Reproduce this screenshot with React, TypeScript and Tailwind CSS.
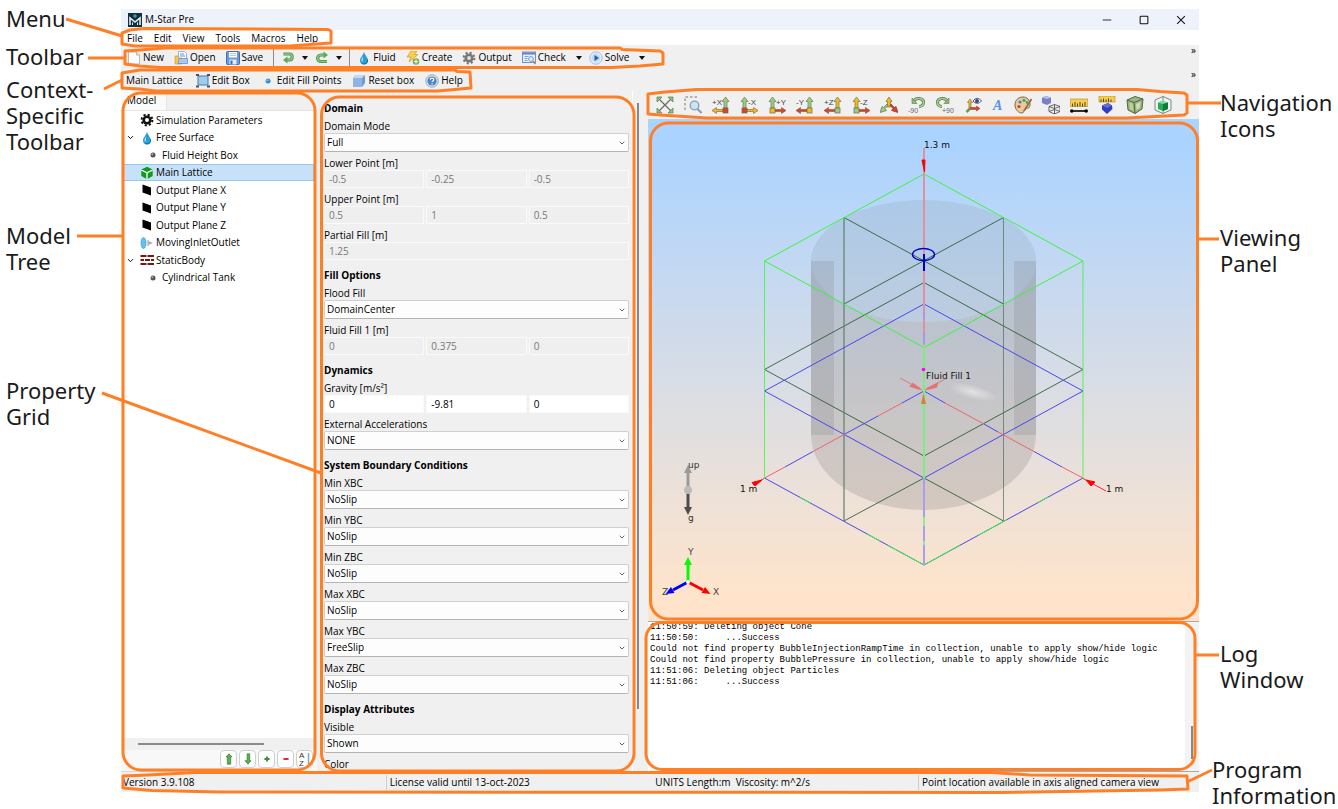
import React, { useId } from 'react';
import { ChevronDown } from 'lucide-react';

type IconProps = { children: React.ReactNode; className?: string };

const Icon = ({ children, className = 'w-[14px] h-[14px]' }: IconProps) => (
  <svg viewBox="0 0 14 14" className={`${className} shrink-0`} fill="none" aria-hidden="true">
    {children}
  </svg>
);

const NewIcon = () => (
  <Icon>
    <path d="M1.5 1h8l3 3v9h-11z" fill="#fdfdfd" stroke="#b9b9b9" />
    <path d="M9.5 1v3h3" fill="#e4e4e4" stroke="#b9b9b9" />
  </Icon>
);

const OpenIcon = () => (
  <Icon>
    <path d="M4.5.5h6l2 2v7h-8z" fill="#fff" stroke="#8fb0dd" />
    <path d="M6 3h4M6 5h5" stroke="#5b8fd0" />
    <path d="M1 5h3l1 2h3v6H1z" fill="#f2c65a" stroke="#d79b2c" strokeWidth=".7" />
    <path d="M5 7.5h8.5v5H4z" fill="#a9c8ef" stroke="#5c88c4" strokeWidth=".7" />
  </Icon>
);

const SaveIcon = () => (
  <Icon>
    <rect x=".5" y=".5" width="13" height="13" rx="1" fill="#6c9ad6" stroke="#3f6fb3" />
    <rect x="3" y="1" width="8" height="5.5" fill="#fff" />
    <path d="M4 2.5h6M4 4.5h6" stroke="#9db8dc" strokeWidth=".8" />
    <rect x="3.5" y="8.5" width="7" height="5" fill="#e5ecf6" />
    <rect x="4.5" y="9.5" width="2" height="4" fill="#3f6fb3" />
  </Icon>
);

const UndoIcon = () => (
  <Icon>
    <path d="M2.5 3h6c3.5 0 3.5 6 0 6H6" stroke="#4b8f4a" strokeWidth="3.2" />
    <path d="M2.5 3h6c3.5 0 3.5 6 0 6H6" stroke="#86c97c" strokeWidth="1.6" />
    <path d="M6.5 5.5v7L2 9z" fill="#5aa957" />
  </Icon>
);

const RedoIcon = () => (
  <Icon>
    <path d="M12 10.5H6c-4.500 0-4.500-6.500 0-6.500h3" stroke="#4b8f4a" strokeWidth="3.2" />
    <path d="M12 10.5H6c-4.500 0-4.500-6.500 0-6.500h3" stroke="#86c97c" strokeWidth="1.6" />
    <path d="M8.5.5v7L13 4z" fill="#5aa957" />
  </Icon>
);

const DropIcon = () => (
  <Icon>
    <path d="M7 .5C7.5 4 11 6.5 11 9.5a4 4 0 0 1-8 0C3 6.5 6.500 4 7 .5z" fill="#2b9fd4" />
    <path d="M6 5.5C4.8 7.5 4.200 8.5 4.5 10c.6 1 1.500.5 1.500-1z" fill="#9fe0fa" />
    <path d="M10.5 8.5a3.500 3.500 0 0 1-5 4" stroke="#14679b" />
  </Icon>
);

const CreateIcon = () => (
  <Icon>
    <path d="M5 0h6L8.5 3.5H12L3 11l2-5H1z" fill="#f8cf4e" stroke="#d9a02b" strokeWidth=".8" />
    <circle cx="10" cy="10.5" r="3.3" fill="#7cae5b" />
    <path d="M8 10.5h4M10 8.5v4" stroke="#eaf5e0" strokeWidth="1.2" />
  </Icon>
);

const GearIcon = ({ color, hole }: { color: string; hole: string }) => (
  <Icon>
    <circle cx="7" cy="7" r="5.4" stroke={color} strokeWidth="2" strokeDasharray="2.120 2.120" />
    <circle cx="7" cy="7" r="4.6" fill={color} />
    <circle cx="7" cy="7" r="2" fill={hole} />
  </Icon>
);

const CheckIcon = () => (
  <Icon>
    <rect x=".5" y="1" width="13" height="10.5" fill="#e8f0fa" stroke="#6a93cd" />
    <path d="M1 2.5h12" stroke="#5583c6" strokeWidth="2" />
    <path d="M2.5 5.5h4M2.5 7.5h3M2.5 9.5h3" stroke="#7da3d8" />
    <circle cx="9" cy="8" r="2.4" fill="#d8ecfb" stroke="#7f9cbb" />
    <path d="m11 10 2.500 3" stroke="#c07a3c" strokeWidth="1.5" />
  </Icon>
);

const SolveIcon = () => (
  <Icon>
    <circle cx="7" cy="7" r="6.2" fill="#e6f0fb" stroke="#a3bddd" />
    <circle cx="7" cy="7" r="4.4" fill="#c3daf4" />
    <path d="M5.5 4v6L10 7z" fill="#1e5fb8" />
  </Icon>
);

const BoxIcon = () => (
  <Icon>
    <rect x="2" y="2" width="10" height="9" fill="#9fcbed" stroke="#4a7ba8" />
    <path d="M0 1h3M0 12.5h3M11 1h3M11 12.5h3" stroke="#44546a" strokeWidth="2" />
  </Icon>
);

const DotIcon = ({ fill }: { fill: string }) => (
  <Icon>
    <circle cx="7" cy="7" r="2.5" fill={fill} />
    <circle cx="6.3" cy="6.3" r="1" fill="#fff" opacity=".5" />
  </Icon>
);

const CubeIcon = () => (
  <Icon>
    <path d="m1 4 3-3h9v8l-3 4H1z" fill="#6f9ad2" />
    <path d="m1 4 3-3h9l-3 3z" fill="#c4d9f3" />
    <path d="M1 4h9v9H1z" fill="#8fb4e3" />
  </Icon>
);

const HelpIcon = () => (
  <Icon>
    <circle cx="7" cy="7" r="6.2" fill="#dbe8f6" stroke="#8aa8cc" />
    <circle cx="7" cy="7" r="4.6" fill="#4f83c2" />
    <path d="M5.3 5.8c0-2.200 3.500-2.200 3.500-.2 0 1.300-1.700 1.300-1.700 2.500M7.100 9.200v1.200" stroke="#fff" strokeWidth="1.2" />
  </Icon>
);

const LatticeIcon = () => (
  <Icon>
    <path d="M7 .8 12.7 3.5v6.6L7 13.2 1.3 10.1V3.5z" fill="#0e9b1d" />
    <path d="M1.300 4 7 6.8 12.7 4M7 6.8v6.4" stroke="#fff" strokeWidth="1.3" />
  </Icon>
);

const PlaneIcon = () => (
  <Icon>
    <path d="m2.500 1.5 8.500 3v8l-8.500-3z" fill="#000" />
  </Icon>
);

const InletIcon = () => (
  <Icon>
    <ellipse cx="3.5" cy="7" rx="2.5" ry="5.5" fill="#5cc4ee" stroke="#3c8fb8" strokeWidth=".6" />
    <path d="M8.500 5 13 7 8.500 9z" fill="#a7adb2" />
    <path d="M8 4v6" stroke="#8f989e" />
  </Icon>
);

const BrickIcon = () => (
  <Icon>
    <path d="M.5 3h6M7.500 3H14M.5 7H4M5 7h5M11 7h3M.5 11h6M7.500 11H14" stroke="#7c1212" strokeWidth="2.2" />
  </Icon>
);

/* ---------- Navigation toolbar drawings ---------- */

const NavIcon = ({ children }: { children: React.ReactNode }) => (
  <svg viewBox="0 0 18 18" className="w-[18px] h-[18px] shrink-0" fill="none" aria-hidden="true">
    {children}
  </svg>
);

type AxisProps = { label: string; side: 'left' | 'right'; up: string; across: string; hub: string };

const AxisIcon = ({ label, side, up, across, hub }: AxisProps) => {
  const left = side === 'left';
  return (
    <NavIcon>
      <path
        d={left ? 'M13.5 1 17 5.5h-2V12h-3V5.5h-2z' : 'M4.5 1 8 5.5H6V12H3V5.5H1z'}
        fill={up}
        stroke="#6d7a58"
        strokeWidth=".7"
      />
      <path
        d={left ? 'M0 14.5 4.500 11.5v2H11v2H4.500v2z' : 'M18 14.5 13.500 11.5v2H7v2h6.500v2z'}
        fill={across}
        stroke="#7a5a3a"
        strokeWidth=".6"
      />
      <rect x={left ? 11 : 2} y="12" width="5" height="5" fill={hub} stroke="#6a6a4a" strokeWidth=".7" />
      <text x={left ? 0 : 8} y="9" fontSize="8" fontFamily="Liberation Sans, sans-serif" fill="#444">
        {label}
      </text>
    </NavIcon>
  );
};

const green = '#9ccb84';
const yellow = '#f5b81f';
const red = '#dd3f2c';

const navItems: { name: string; narrow?: boolean; icon: React.ReactNode }[] = [
  {
    name: 'Fit view',
    icon: (
      <NavIcon>
        <path d="m3 3 12 12M15 3 3 15" stroke="#666c5e" strokeWidth="1.2" />
        <path d="M1 1h5L1 6zM17 1h-5l5 5zM1 17h5l-5-5zM17 17h-5l5-5z" fill="#8fc07c" stroke="#5a7d4c" strokeWidth=".7" />
      </NavIcon>
    ),
  },
  {
    name: 'Zoom to box',
    icon: (
      <NavIcon>
        <path d="M1 14V1h14" stroke="#777" strokeDasharray="2.5 2" />
        <circle cx="10.5" cy="9.5" r="4.3" fill="#c9e6f7" stroke="#8b9aa6" strokeWidth="1.3" />
        <path d="m13.500 13 4 4" stroke="#8b9aa6" strokeWidth="2" />
      </NavIcon>
    ),
  },
  { name: 'View +X', icon: <AxisIcon label="+X" side="left" up={green} across={yellow} hub={red} /> },
  { name: 'View -X', icon: <AxisIcon label="-X" side="right" up={green} across={yellow} hub={red} /> },
  { name: 'View +Y', icon: <AxisIcon label="+Y" side="right" up={green} across={red} hub={yellow} /> },
  { name: 'View -Y', icon: <AxisIcon label="-Y" side="left" up={green} across={red} hub={yellow} /> },
  { name: 'View +Z', icon: <AxisIcon label="+Z" side="left" up={yellow} across={red} hub={green} /> },
  { name: 'View -Z', icon: <AxisIcon label="-Z" side="right" up={yellow} across={red} hub={green} /> },
  {
    name: 'Isometric view',
    icon: (
      <NavIcon>
        <path d="M9 1l3 4.500h-1.500V11h-3V5.500H6z" fill={yellow} stroke="#7a6a3a" strokeWidth=".7" />
        <path d="m8 9.500-3 3 1.500 2L0 16.500 2 10.500l1.500 1L7 8z" fill={green} stroke="#5a7048" strokeWidth=".7" />
        <path d="m10 9.500 3 3-1.500 2 6.500 2-2-6-1.500 1L11 8z" fill={red} stroke="#7a3a2a" strokeWidth=".7" />
      </NavIcon>
    ),
  },
  {
    name: 'Rotate -90',
    icon: (
      <NavIcon>
        <path d="M6 5c2-4 9.500-3 9.500 1.500 0 2.500-2 4-4.500 4" stroke="#5d7a4e" strokeWidth="3" />
        <path d="M6 5c2-4 9.500-3 9.500 1.500 0 2.500-2 4-4.500 4" stroke="#a5cf90" strokeWidth="1.5" />
        <path d="M4 2v5.500h5z" fill="#8dbb78" stroke="#5d7a4e" strokeWidth=".6" />
        <text x="0" y="17" fontSize="7" fontFamily="Liberation Sans, sans-serif" fill="#666">-90</text>
      </NavIcon>
    ),
  },
  {
    name: 'Rotate +90',
    icon: (
      <NavIcon>
        <path d="M11 5C9 1 1.500 2 1.500 6.500c0 2.500 2 4 4.500 4" stroke="#5d7a4e" strokeWidth="3" />
        <path d="M11 5C9 1 1.500 2 1.500 6.500c0 2.500 2 4 4.500 4" stroke="#a5cf90" strokeWidth="1.5" />
        <path d="M13 2v5.500H8z" fill="#8dbb78" stroke="#5d7a4e" strokeWidth=".6" />
        <text x="6" y="17" fontSize="7" fontFamily="Liberation Sans, sans-serif" fill="#666">+90</text>
      </NavIcon>
    ),
  },
  {
    name: 'Orientation axes',
    icon: (
      <NavIcon>
        <path d="M6 3 8.500 6.500H7V13H5V6.500H3.500z" fill={yellow} stroke="#6d6a38" strokeWidth=".6" />
        <path d="M16 12.500 12.500 10v1.500H6v2h6.500V15z" fill={red} stroke="#7a3a2a" strokeWidth=".5" />
        <path d="m6.500 12-4 4" stroke="#6a9a50" strokeWidth="2.5" />
        <path d="M9 5c2.500-3.500 6-3.500 8.500 0-2.500 3-6 3-8.500 0z" fill="#fff" stroke="#555" />
        <circle cx="13" cy="5" r="2" fill="#3b3f9c" />
      </NavIcon>
    ),
  },
  {
    name: 'Text labels',
    narrow: true,
    icon: (
      <NavIcon>
        <text x="4" y="14" fontSize="14" fontStyle="italic" fontWeight="700" fontFamily="Liberation Serif, serif" fill="#5a93e0">
          A
        </text>
      </NavIcon>
    ),
  },
  {
    name: 'Colors',
    icon: (
      <NavIcon>
        <path d="M9 1C4 1 1 4.500 1 9c0 5 4 8 7 8 2.500 0 1-3 3-4s5 0 5-4.500S13 1 9 1z" fill="#eacb9a" stroke="#7d6648" />
        <circle cx="6" cy="6" r="1.6" fill="#3a8ad8" />
        <circle cx="10" cy="4.3" r="1.6" fill="#4aa84a" />
        <circle cx="5" cy="10.5" r="1.6" fill="#da3a2e" />
        <circle cx="13" cy="6.5" r="1.4" fill="#3aa0b8" />
        <path d="M17.500 3 10 15" stroke="#a06b35" strokeWidth="1.8" />
      </NavIcon>
    ),
  },
  {
    name: 'Solid or wireframe',
    icon: (
      <NavIcon>
        <path d="M0 1.500 4 0l5 1.500V7L5 9 0 7z" fill="#7a80c8" />
        <path d="M0 1.500 4 0l5 1.500L5 3z" fill="#b9bdea" />
        <path d="m7 10.500 5.500-2 5.500 2v5L12.500 18 7 15.500zM12.500 8.500V18M7 10.500l5.500 2 5.500-2M7 15.500l5.500-2 5.500 2" stroke="#555" strokeWidth=".9" />
      </NavIcon>
    ),
  },
  {
    name: 'Measure distance',
    icon: (
      <NavIcon>
        <rect y="3" width="18" height="7.5" fill="#f7cd4c" stroke="#a98828" strokeWidth=".6" />
        <path d="M2.500 10.500v-3M5 10.500V6M7.500 10.500v-3M10 10.500V6M12.500 10.500v-3M15 10.500V6" stroke="#5a4714" />
        <path d="M1 15h16" stroke="#000" strokeWidth="1.6" />
        <circle cx="1.8" cy="15" r="1.8" fill="#000" />
        <circle cx="16.2" cy="15" r="1.8" fill="#000" />
      </NavIcon>
    ),
  },
  {
    name: 'Measure body',
    icon: (
      <NavIcon>
        <rect x="1" y="0" width="16" height="6" fill="#f7cd4c" stroke="#a98828" strokeWidth=".6" />
        <path d="M3 6V3.500M5.500 6V2.500M8 6V3.500M10.500 6V2.500M13 6V3.500" stroke="#5a4714" />
        <path d="m4 9.500 6-2.500 4 2.500.5 3.500-5.500 5-5-4.500z" fill="#2f3fc4" />
        <path d="m4 9.500 6-2.500 4 2.500-5 2.500z" fill="#6470c8" />
      </NavIcon>
    ),
  },
  {
    name: 'Show domain box',
    icon: (
      <NavIcon>
        <path d="m1 4 8-3.500L17 3l-1 10-7 4.500L2 14z" fill="#9cb582" stroke="#4f6a3c" />
        <path d="m1 4 7 2.500L17 3M8 6.500l1 11" stroke="#4f6a3c" />
        <path d="m3.500 6.500 3 1 .8 7-3.300-1.500z" fill="#b9d29e" />
        <path d="m10 8 4.500-2-1 6-3 2z" fill="#cfdcc0" />
      </NavIcon>
    ),
  },
  {
    name: 'Show fluid box',
    icon: (
      <NavIcon>
        <path d="m1 4 8-3.500L17 4v10l-8 3.500L1 14zM9 .5v17" fill="#f0f3f1" stroke="#7d8b84" />
        <path d="m4 6.500 4-1.500 6 1.500v6.500l-5 2-5-2z" fill="#1fae54" />
        <path d="m4 6.500 4-1.500 6 1.500-5 1.500z" fill="#7fe0a2" />
        <path d="M9 8v7l5-2V6.500z" fill="#0f7d38" />
      </NavIcon>
    ),
  },
];

/* ---------- Small controls ---------- */

const ToolButton = ({ icon, label }: { icon: React.ReactNode; label: string }) => (
  <button type="button" className="flex items-center gap-[2px] whitespace-nowrap">
    {icon}
    <span>{label}</span>
  </button>
);

const Caret = ({ label }: { label: string }) => (
  <button type="button" aria-label={label} className="w-[6px] h-4 flex items-center">
    <svg viewBox="0 0 6 4" className="w-[6px] h-[4px]" aria-hidden="true">
      <path d="M0 0h6L3 4z" fill="#111" />
    </svg>
  </button>
);

const Separator = () => <div className="w-px h-[18px] bg-[#8c8c8c]"></div>;

const SelectField = ({ label, value }: { label: string; value: string }) => {
  const id = useId();
  return (
    <div className="mb-1">
      <label htmlFor={id} className="block leading-[14px]">{label}</label>
      <div className="relative">
        <select
          id={id}
          defaultValue={value}
          className="block w-full h-[19px] appearance-none border border-[#d0d0d0] border-b-[#b4b4b4] rounded-xs bg-[#fdfdfd] pl-[2px] leading-[17px] text-black"
        >
          <option>{value}</option>
        </select>
        <ChevronDown className="absolute right-[3px] top-[6px] w-2 h-2 text-[#444] pointer-events-none" strokeWidth={2.5} />
      </div>
    </div>
  );
};

const InputField = ({ label, values, disabled = true }: { label: string; values: string[]; disabled?: boolean }) => {
  const id = useId();
  return (
    <div className="mb-1">
      <label htmlFor={`${id}-0`} className="block leading-[14px]">{label}</label>
      <div className="flex gap-[2px]">
        {values.map((value, i) => (
          <input
            key={i}
            id={`${id}-${i}`}
            aria-label={`${label} ${i + 1}`}
            defaultValue={value}
            disabled={disabled}
            className="min-w-0 flex-1 h-[18px] border border-[#fafafa] bg-white pl-[4px] text-black disabled:bg-[#efefef] disabled:text-[#777]"
          />
        ))}
      </div>
    </div>
  );
};

const Section = ({ title, children }: { title: string; children: React.ReactNode }) => (
  <section className="mb-2">
    <h3 className="h-[18px] leading-[14px] font-bold">{title}</h3>
    {children}
  </section>
);

const treeItems = [
  { label: 'Simulation Parameters', icon: <GearIcon color="#111" hole="#fff" /> },
  { label: 'Free Surface', icon: <DropIcon />, open: true },
  { label: 'Fluid Height Box', icon: <DotIcon fill="#555" />, nested: true },
  { label: 'Main Lattice', icon: <LatticeIcon />, selected: true },
  { label: 'Output Plane X', icon: <PlaneIcon /> },
  { label: 'Output Plane Y', icon: <PlaneIcon /> },
  { label: 'Output Plane Z', icon: <PlaneIcon /> },
  { label: 'MovingInletOutlet', icon: <InletIcon /> },
  { label: 'StaticBody', icon: <BrickIcon />, open: true },
  { label: 'Cylindrical Tank', icon: <DotIcon fill="#555" />, nested: true },
];

const TreeAction = ({ label, children }: { label: string; children: React.ReactNode }) => (
  <button
    type="button"
    aria-label={label}
    className="w-[17px] h-[18px] grid place-items-center bg-white border border-[#cfcfcf] rounded-sm"
  >
    {children}
  </button>
);

const ModelTree = () => (
  <div className="w-[196px] shrink-0 flex flex-col bg-[#f8f8f8]">
    <div className="h-5 shrink-0 flex bg-[#f0f0f0] border-b border-[#e4e4e4]">
      <button type="button" className="w-[46px] bg-[#fafafa] border-r border-[#e4e4e4] text-left pl-[6px]">
        Model
      </button>
    </div>
    <ul className="flex-1 min-h-0 bg-white ml-px mr-[3px]">
      {treeItems.map(item => (
        <li
          key={item.label}
          className={`flex items-center gap-[2px] pl-1 odd:h-[18px] even:h-[17px] border ${
            item.selected ? 'bg-[#c7e2f8] border-[#94c8f0]' : 'border-transparent'
          }`}
        >
          <span className="w-[11px] shrink-0">
            {item.open && <ChevronDown className="w-[9px] h-[9px] -ml-px text-black" strokeWidth={2.5} />}
          </span>
          {item.nested && <span className="w-1 shrink-0"></span>}
          {item.icon}
          <span className="whitespace-nowrap">{item.label}</span>
        </li>
      ))}
    </ul>
    <div className="h-3 shrink-0 bg-[#f0f0f0] flex items-center pl-[17px]">
      <div className="w-[126px] h-[2px] bg-[#8a8a8a]"></div>
    </div>
    <div className="h-[22px] shrink-0 flex justify-end gap-[2px] pr-1 border-b border-[#d8d8d8]">
      <TreeAction label="Move up">
        <Icon className="w-3 h-3">
          <path d="M7 1l3.500 3.500H9V13H5V4.500H3.500z" fill="#5fae57" stroke="#2f7a2c" strokeWidth=".8" />
        </Icon>
      </TreeAction>
      <TreeAction label="Move down">
        <Icon className="w-3 h-3">
          <path d="M7 13l3.500-4H9V1H6v8H3.500z" fill="#5fae57" stroke="#2f7a2c" strokeWidth=".8" />
        </Icon>
      </TreeAction>
      <TreeAction label="Add">
        <Icon className="w-3 h-3">
          <path d="M7 4v6M4 7h6" stroke="#3d8c34" strokeWidth="2.2" />
        </Icon>
      </TreeAction>
      <TreeAction label="Remove">
        <Icon className="w-3 h-3">
          <path d="M4 7h6" stroke="#d8232a" strokeWidth="2.2" />
        </Icon>
      </TreeAction>
      <TreeAction label="Sort">
        <Icon className="w-[14px] h-4">
          <text x="1" y="6" fontSize="8" fontFamily="Liberation Sans, sans-serif" fill="#333">A</text>
          <text x="1" y="13.5" fontSize="8" fontFamily="Liberation Sans, sans-serif" fill="#333">Z</text>
          <path d="M10.500 1v11" stroke="#7aa7d8" strokeWidth="1.5" />
        </Icon>
      </TreeAction>
    </div>
  </div>
);

const PropertyGrid = () => (
  <div className="w-[331px] shrink-0 flex min-h-0 overflow-hidden">
    <div className="flex-1 min-w-0 overflow-hidden pl-[7px] pr-[3px] pt-[10px] border-r border-white">
      <Section title="Domain">
        <SelectField label="Domain Mode" value="Full" />
        <InputField label="Lower Point [m]" values={['-0.5', '-0.25', '-0.5']} />
        <InputField label="Upper Point [m]" values={['0.5', '1', '0.5']} />
        <InputField label="Partial Fill [m]" values={['1.25']} />
      </Section>
      <Section title="Fill Options">
        <SelectField label="Flood Fill" value="DomainCenter" />
        <InputField label="Fluid Fill 1 [m]" values={['0', '0.375', '0']} />
      </Section>
      <Section title="Dynamics">
        <InputField label="Gravity [m/s²]" values={['0', '-9.81', '0']} disabled={false} />
        <SelectField label="External Accelerations" value="NONE" />
      </Section>
      <Section title="System Boundary Conditions">
        <SelectField label="Min XBC" value="NoSlip" />
        <SelectField label="Min YBC" value="NoSlip" />
        <SelectField label="Min ZBC" value="NoSlip" />
        <SelectField label="Max XBC" value="NoSlip" />
        <SelectField label="Max YBC" value="FreeSlip" />
        <SelectField label="Max ZBC" value="NoSlip" />
      </Section>
      <Section title="Display Attributes">
        <SelectField label="Visible" value="Shown" />
        <SelectField label="Color" value="" />
      </Section>
    </div>
    <div className="w-[15px] shrink-0 pt-3 pb-[63px] pl-[4px]">
      <div className="w-[2px] h-full bg-[#85898c]"></div>
    </div>
  </div>
);

const Viewport = () => (
  <div className="flex-1 min-h-0 bg-linear-to-b from-[#abd3ff] from-5% to-[#ffe4cb] to-95%">
    <svg
      viewBox="648 119 551 501"
      preserveAspectRatio="xMidYMin meet"
      className="w-full h-full"
      fill="none"
      fontFamily="DejaVu Sans, sans-serif"
      fontSize="9"
    >
      <defs>
        <radialGradient id="shine">
          <stop offset="0" stopColor="#fff" stopOpacity=".5" />
          <stop offset="1" stopColor="#fff" stopOpacity="0" />
        </radialGradient>
      </defs>

      {/* Tank */}
      <path d="M811 261V435a112.5 75 0 0 0 225 0V261a112.5 61 0 0 1-225 0z" fill="#8c8480" fillOpacity=".27" />
      <ellipse cx="923.5" cy="261" rx="112.5" ry="61" fill="#93a5b8" fillOpacity=".26" />
      <path d="M811 261h23v174h-23zM1014 261h22v174h-22z" fill="#77777c" fillOpacity=".2" />
      <ellipse cx="973" cy="392" rx="25" ry="7" fill="url(#shine)" transform="rotate(15 973 392)" />

      {/* Mid planes */}
      <g stroke="#1c5426" opacity=".8">
        <path d="M844 217.5 1003.5 304M1003.5 217.5 844 304" />
        <path d="M924 282.5 1083 369.5 924 456 764.5 369.5z" />
        <path d="M844 521 924 478 1003.5 521" />
      </g>
      <path d="M844 217.5V521" stroke="#5f7f6c" strokeWidth="2" opacity=".6" />
      <path d="M1003.5 217.5V521" stroke="#4d7058" opacity=".7" />

      {/* Fluid box */}
      <g stroke="#4848f0">
        <path d="M924 304 1083 391 924 478 764.5 391z" />
        <path d="M902 403 924 391 945 403M878 416 845 434M813 451.5 785 467M984 424 998 432M1034 451.5 1062 467" />
        <path d="M764.5 478 924 565 1083 478" />
      </g>
      <g stroke="#f06464">
        <path d="M902 403 878 416M845 434 813 451.5M785 467 764.5 478" />
        <path d="M945 403 984 424M998 432 1034 451.5M1062 467 1083 478" />
      </g>

      {/* Domain box */}
      <g stroke="#3cf53c">
        <path d="M924 174 1083 261 924 347.5 764.5 261z" />
        <path d="M764.5 261V478M1083 261V478" opacity=".8" />
        <path d="M800 497.5 810 503M867 534 880 541M888 545.500 924 565 960 545M978 535.5 1007 519.5M1038 502.5 1048 497" />
      </g>
      <path d="M924 347.5V478" stroke="#7dee7d" strokeWidth="2" />
      <path d="M924 478V565" stroke="#a8a0ec" strokeWidth="2" />
      <path d="M924 517v9M924 541v4" stroke="#8cec8c" strokeWidth="2" />

      {/* Dimension arrows */}
      <path d="M924 148V345" stroke="#e2909e" strokeWidth="2" />
      <path d="M924 312v7M924 332v12" stroke="#a79be0" strokeWidth="2" />
      <path d="M922 160h3l-.5 12z" fill="#f00" stroke="#f00" />
      <path d="M764 478.5 753 485M1083 478.5l23 12.500" stroke="#f22" />
      <path d="m762 480-7 6-3-3.500zM1086 480l9 2-4 4z" fill="#f00" stroke="#f00" />
      <g stroke="#e57373">
        <path d="m900 378 22 12M947 378l-22 12" />
        <path d="m911 386 9 3-7-5zM937 384l-10 5 9-2z" fill="#e86060" strokeWidth="2" />
      </g>
      <path d="M923.5 393 926 404h-5z" fill="#c98a35" />
      <circle cx="923.5" cy="369.5" r="1.8" fill="#f0f" />
      <ellipse cx="923.5" cy="254.5" rx="11" ry="6" stroke="#0000c8" strokeWidth="1.4" />
      <path d="M924 254v17" stroke="#0000c8" strokeWidth="2" />

      <g fill="#111">
        <text x="924" y="148">1.3 m</text>
        <text x="740" y="492">1 m</text>
        <text x="1106" y="492">1 m</text>
        <text x="926" y="379">Fluid Fill 1</text>
      </g>

      {/* Gravity indicator */}
      <path d="M688 490V470" stroke="#9a9a9a" strokeWidth="3" />
      <path d="m688 465 4 8h-8z" fill="#9a9a9a" />
      <path d="M688 490v20" stroke="#4c4c4c" strokeWidth="3" />
      <path d="m688 515 4-8h-8z" fill="#4c4c4c" />
      <circle cx="688" cy="490" r="4" fill="#bcbcbc" />
      <g fill="#333">
        <text x="688" y="468">up</text>
        <text x="688" y="521">g</text>
      </g>

      {/* Axis triad */}
      <path d="M688 582V564" stroke="#0f0" strokeWidth="3" />
      <path d="m688 557 4 8h-8z" fill="#0f0" />
      <path d="m688 582 15 8" stroke="#f00" strokeWidth="3" />
      <path d="m710.5 594-9-1 3.500-6z" fill="#f00" />
      <path d="m688 582-15 8" stroke="#00f" strokeWidth="3" />
      <path d="m665.5 594 9-1-3.500-6z" fill="#00f" />
      <circle cx="688" cy="582" r="2" fill="#fff" />
      <g fill="#444">
        <text x="688" y="555">Y</text>
        <text x="713" y="595">X</text>
        <text x="662" y="595">Z</text>
      </g>
    </svg>
  </div>
);

const logLines = [
  '11:50:59: Deleting object Cone',
  '11:50:50:     ...Success',
  'Could not find property BubbleInjectionRampTime in collection, unable to apply show/hide logic',
  'Could not find property BubblePressure in collection, unable to apply show/hide logic',
  '11:51:06: Deleting object Particles',
  '11:51:06:     ...Success',
];

const LogWindow = () => (
  <div className="h-[151px] shrink-0 flex bg-white border-y border-[#a8a8a8]">
    <pre className="flex-1 min-w-0 overflow-hidden pl-[2px] font-['Liberation_Mono',monospace] text-[9px] leading-[11px] text-black">
      {logLines.join('\n')}
    </pre>
    <div className="w-[14px] shrink-0 bg-[#f3f3f3] flex flex-col justify-end items-center pb-3">
      <div className="w-[2px] h-[33px] bg-[#85898c]"></div>
    </div>
  </div>
);

/* ---------- Hand-drawn outlines and leader lines ---------- */

const Callouts = () => (
  <svg
    viewBox="0 0 1338 809"
    preserveAspectRatio="none"
    className="absolute inset-0 w-full h-full pointer-events-none"
    fill="none"
    stroke="#ff7f27"
    strokeWidth="3"
    strokeLinejoin="round"
    aria-hidden="true"
  >
    <path d="M122 33 130 30 144 28.5 328 29.5 331 31V43L316 44 290 46H135L122 44z" />
    <path d="M125 51 140 50 165 48H620L622 49.5 660 51 663 53V64L640 66 612 67.5H160L140 66 125 64z" />
    <path d="M122 73 140 70H455L457 71.5 470 72 471 88 460 89 438 91H155L140 89 122 88z" />
    <rect x="123" y="93" width="192" height="677" rx="18" />
    <rect x="321.5" y="97" width="312.5" height="674" rx="18" />
    <path d="M648 94 665 92 697 89.5H1137L1160 91.5 1184 93 1187 95V113L1184 115 1127 118H707L660 115 648 114z" />
    <rect x="650.5" y="123" width="547" height="496" rx="18" />
    <rect x="646" y="622.5" width="549" height="147" rx="16" />
    <path d="M123 776 148 775 195 772.5H992L1030 775 1187 776 1188 789 1160 790 1000 792.5 220 792 152 790.5 123 788z" />
    <path d="M66 19 122 36M88 58H124M104 89 122 80M77 236H122M102 393 321 473" />
    <path d="M1187 103H1221M1197 239H1219M1196 655H1219M1187 782 1212 770" />
  </svg>
);

const menus = ['File', 'Edit', 'View', 'Tools', 'Macros', 'Help'];

const App = () => {
  return (
    <div className="relative h-screen overflow-hidden flex bg-white text-black font-['Open_Sans','Noto_Sans',sans-serif] text-[10px]">
      <aside className="w-[121px] shrink-0 pl-[6px] pt-[5px] font-['Noto_Sans',sans-serif] text-[22px] leading-[26px] text-[#1a1a1a]">
        <p>Menu</p>
        <p className="mt-3">Toolbar</p>
        <p className="mt-[7px]">Context-<br />Specific<br />Toolbar</p>
        <p className="mt-[68px]">Model<br />Tree</p>
        <p className="mt-[103px]">Property<br />Grid</p>
      </aside>

      <main className="flex-1 min-w-0 flex flex-col pt-[9px] pb-[17px]">
        {/* Title bar */}
        <header className="h-[21px] shrink-0 flex items-center bg-[#eef3fb] pl-[7px] pr-3">
          <Icon>
            <rect width="14" height="14" fill="#10303f" />
            <path d="M2 12V5l5 4 5-4v7" stroke="#e8eef2" strokeWidth="1.6" />
            <path d="M7 1v4M5 3h4" stroke="#5ab4c8" />
            <path d="M4.500 12V9.500M9.500 12V9.500" stroke="#e8eef2" />
          </Icon>
          <h1 className="flex-1 pl-[3px]">M-Star Pre</h1>
          <div className="flex gap-[25px]">
            <button type="button" aria-label="Minimize">
              <Icon className="w-3 h-3"><path d="M2 7h10" stroke="#111" /></Icon>
            </button>
            <button type="button" aria-label="Maximize">
              <Icon className="w-3 h-3"><rect x="2.5" y="2.5" width="9" height="9" rx="1" stroke="#111" strokeWidth="1.2" /></Icon>
            </button>
            <button type="button" aria-label="Close">
              <Icon className="w-3 h-3"><path d="m2.500 2.500 9 9M11.500 2.500l-9 9" stroke="#111" strokeWidth="1.2" /></Icon>
            </button>
          </div>
        </header>

        {/* Menu */}
        <nav className="h-[15px] shrink-0 flex items-center gap-[11px] bg-white pl-[6px] pt-px">
          {menus.map(menu => (
            <button type="button" key={menu}>{menu}</button>
          ))}
        </nav>

        {/* Toolbar */}
        <div className="h-[25px] shrink-0 flex items-center gap-[10px] bg-[#f0f0f0] pl-[6px] pr-[3px]">
          <ToolButton icon={<NewIcon />} label="New" />
          <ToolButton icon={<OpenIcon />} label="Open" />
          <ToolButton icon={<SaveIcon />} label="Save" />
          <div className="flex items-center gap-[7px]">
            <Separator />
            <button type="button" aria-label="Undo"><UndoIcon /></button>
            <Caret label="Undo history" />
            <button type="button" aria-label="Redo"><RedoIcon /></button>
            <Caret label="Redo history" />
            <Separator />
            <ToolButton icon={<DropIcon />} label="Fluid" />
          </div>
          <ToolButton icon={<CreateIcon />} label="Create" />
          <ToolButton icon={<GearIcon color="#777" hole="#ddd" />} label="Output" />
          <ToolButton icon={<CheckIcon />} label="Check" />
          <div className="flex items-center gap-[7px]">
            <Caret label="Check options" />
            <ToolButton icon={<SolveIcon />} label="Solve" />
          </div>
          <Caret label="Solve options" />
          <button type="button" aria-label="More tools" className="ml-auto self-start leading-[10px]">»</button>
        </div>

        {/* Context toolbar */}
        <div className="h-[21px] shrink-0 flex items-center gap-[11px] bg-[#f0f0f0] pl-[5px] pr-[3px]">
          <span className="pr-[2px]">Main Lattice</span>
          <ToolButton icon={<BoxIcon />} label="Edit Box" />
          <ToolButton icon={<DotIcon fill="#2f8fd0" />} label="Edit Fill Points" />
          <ToolButton icon={<CubeIcon />} label="Reset box" />
          <ToolButton icon={<HelpIcon />} label="Help" />
          <button type="button" aria-label="More actions" className="ml-auto self-start leading-[8px]">»</button>
        </div>

        <div className="flex-1 min-h-0 flex bg-[#f0f0f0]">
          <ModelTree />
          <PropertyGrid />
          <div className="flex-1 min-w-0 flex flex-col">
            <div className="h-7 shrink-0 flex items-center pl-[3px]">
              {navItems.map(item => (
                <button
                  type="button"
                  key={item.name}
                  aria-label={item.name}
                  className={`${item.narrow ? 'w-[22px]' : 'w-7'} h-6 flex items-center justify-center`}
                >
                  {item.icon}
                </button>
              ))}
            </div>
            <Viewport />
            <LogWindow />
          </div>
        </div>

        {/* Status bar */}
        <footer className="h-[20px] shrink-0 flex items-center bg-[#f0f0f0] whitespace-pre">
          <span className="flex-1 pl-[2px]">Version 3.9.108</span>
          <span className="flex-1 pl-[3px] border-l border-[#cfcfcf]">License valid until 13-oct-2023</span>
          <span className="flex-1 pl-[3px]">{'UNITS Length:m  Viscosity: m^2/s'}</span>
          <span className="w-[281px] pl-[3px] border-l border-[#cfcfcf]">Point location available in axis aligned camera view</span>
        </footer>
      </main>

      <aside className="w-[139px] shrink-0 pl-[13px] pt-[89px] font-['Noto_Sans',sans-serif] text-[22px] leading-[26px] text-[#1a1a1a]">
        <p className="pl-2">Navigation<br />Icons</p>
        <p className="pl-2 mt-[83px]">Viewing<br />Panel</p>
        <p className="pl-2 mt-[364px]">Log<br />Window</p>
        <p className="mt-16">Program<br />Information</p>
      </aside>

      <Callouts />
    </div>
  );
};

export default App;
